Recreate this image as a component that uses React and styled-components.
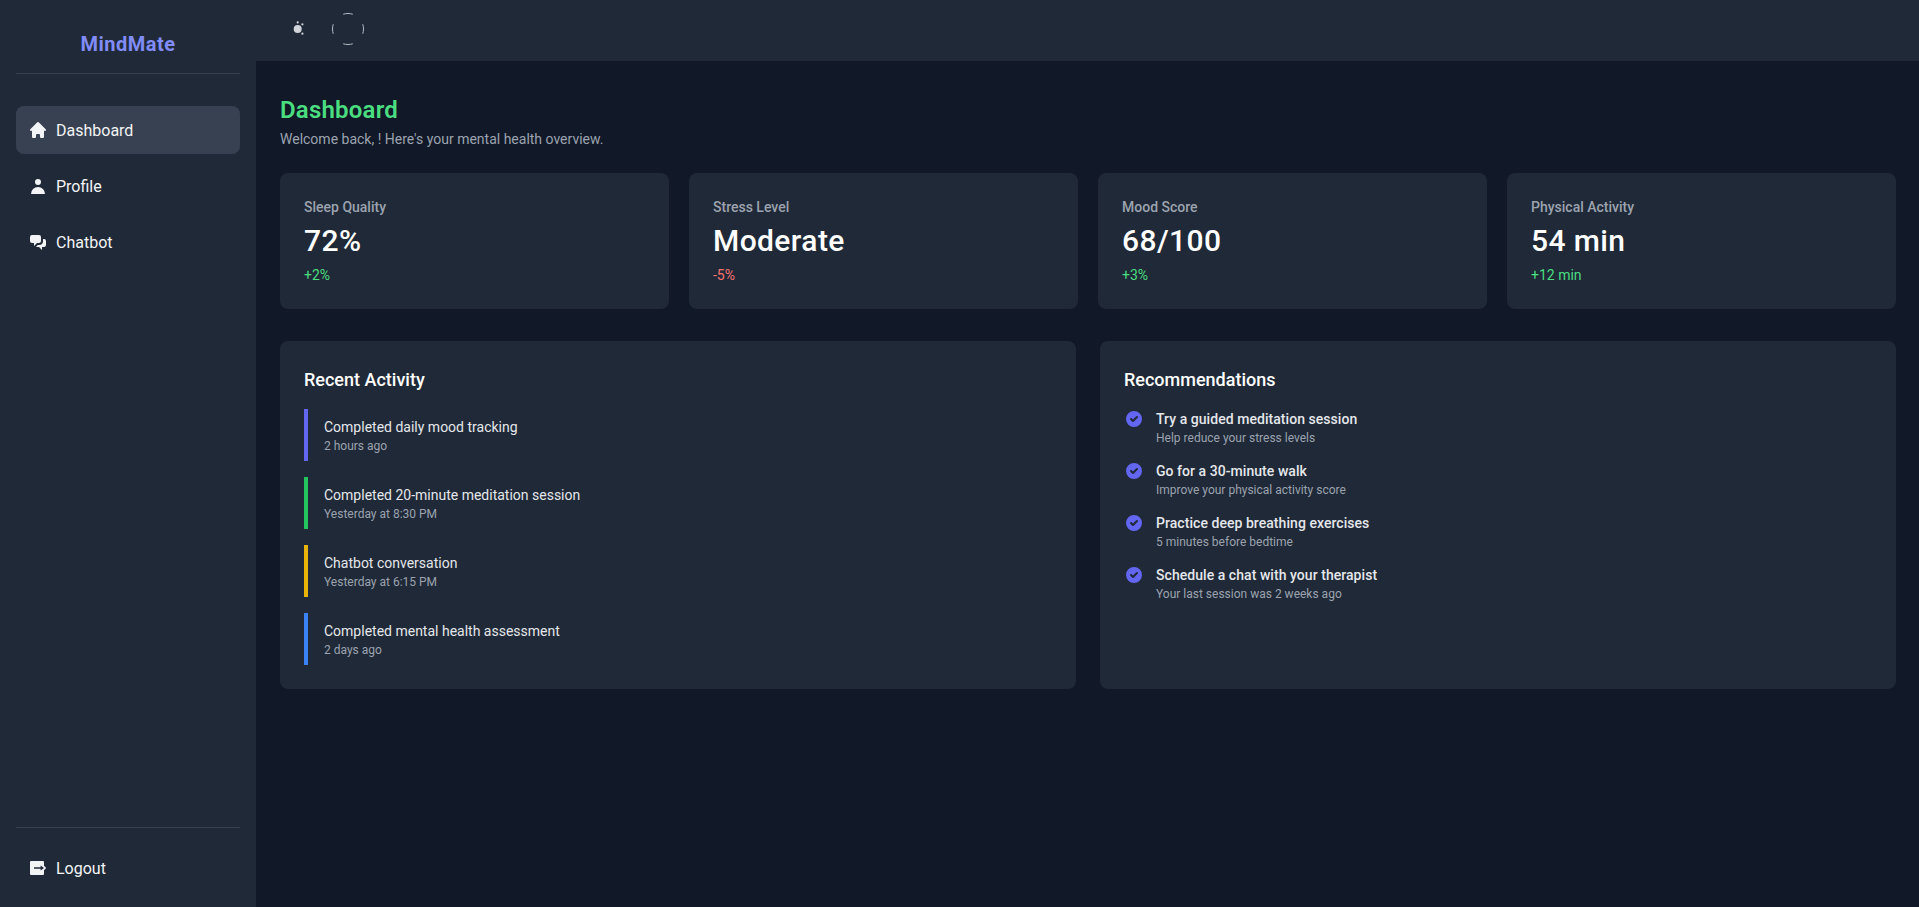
import React from 'react'
import styled, { createGlobalStyle } from 'styled-components'
import { HiHome, HiUser, HiChatAlt2, HiCheckCircle } from 'react-icons/hi'

const stats = [
  { label: 'Sleep Quality', value: '72%', delta: '+2%', good: true },
  { label: 'Stress Level', value: 'Moderate', delta: '-5%', good: false },
  { label: 'Mood Score', value: '68/100', delta: '+3%', good: true },
  { label: 'Physical Activity', value: '54 min', delta: '+12 min', good: true },
]

const activity = [
  { title: 'Completed daily mood tracking', time: '2 hours ago', color: '#6366f1' },
  { title: 'Completed 20-minute meditation session', time: 'Yesterday at 8:30 PM', color: '#22c55e' },
  { title: 'Chatbot conversation', time: 'Yesterday at 6:15 PM', color: '#eab308' },
  { title: 'Completed mental health assessment', time: '2 days ago', color: '#3b82f6' },
]

const recommendations = [
  { title: 'Try a guided meditation session', note: 'Help reduce your stress levels' },
  { title: 'Go for a 30-minute walk', note: 'Improve your physical activity score' },
  { title: 'Practice deep breathing exercises', note: '5 minutes before bedtime' },
  { title: 'Schedule a chat with your therapist', note: 'Your last session was 2 weeks ago' },
]

const SunIcon = () => (
  <svg width="20" height="20" viewBox="0 0 20 20" fill="#d1d5db">
    <circle cx="9.7" cy="10" r="4" />
    <circle cx="9.7" cy="3.4" r="1.1" />
    <circle cx="14.4" cy="5.3" r="1.1" />
    <circle cx="14.4" cy="14.7" r="1.1" />
  </svg>
)

const AvatarRing = () => (
  <svg width="32" height="32" viewBox="0 0 32 32" fill="none">
    <circle cx="16" cy="16" r="15.5" stroke="#b6bcc6" pathLength="100" strokeDasharray="10 15" strokeDashoffset="5" />
  </svg>
)

const LogoutIcon = () => (
  <svg width="20" height="20" viewBox="0 0 20 20" fill="currentColor">
    <path
      fillRule="evenodd"
      d="M3 3H15a1 1 0 0 1 1 1V16a1 1 0 0 1-1 1H3a1 1 0 0 1-1-1V4a1 1 0 0 1 1-1ZM6 9.2H12.6V7.4L16 10L12.6 12.6V10.8H6Z"
    />
    <path d="M16 7.8L18.2 10L16 12.2Z" />
  </svg>
)

const App = () => {
  return (
    <Layout>
      <GlobalStyle />
      <Sidebar>
        <Brand>MindMate</Brand>
        <Nav>
          <NavItem $active><HiHome size={20} />Dashboard</NavItem>
          <NavItem><HiUser size={20} />Profile</NavItem>
          <NavItem><HiChatAlt2 size={20} />Chatbot</NavItem>
        </Nav>
        <SidebarFooter>
          <NavItem><LogoutIcon />Logout</NavItem>
        </SidebarFooter>
      </Sidebar>
      <Content>
        <Header>
          <ThemeButton><SunIcon /></ThemeButton>
          <AvatarRing />
        </Header>
        <Main>
          <Title>Dashboard</Title>
          <Welcome>Welcome back, ! Here's your mental health overview.</Welcome>
          <StatGrid>
            {stats.map((s) => (
              <StatCard key={s.label}>
                <StatLabel>{s.label}</StatLabel>
                <StatValue>{s.value}</StatValue>
                <StatDelta $good={s.good}>{s.delta}</StatDelta>
              </StatCard>
            ))}
          </StatGrid>
          <PanelGrid>
            <Panel>
              <PanelTitle>Recent Activity</PanelTitle>
              <List>
                {activity.map((a) => (
                  <ActivityItem key={a.title} $color={a.color}>
                    <ActivityTitle>{a.title}</ActivityTitle>
                    <Small>{a.time}</Small>
                  </ActivityItem>
                ))}
              </List>
            </Panel>
            <Panel>
              <PanelTitle>Recommendations</PanelTitle>
              <List>
                {recommendations.map((r) => (
                  <RecItem key={r.title}>
                    <HiCheckCircle size={20} color="#6366f1" />
                    <div>
                      <RecTitle>{r.title}</RecTitle>
                      <Small>{r.note}</Small>
                    </div>
                  </RecItem>
                ))}
              </List>
            </Panel>
          </PanelGrid>
        </Main>
      </Content>
    </Layout>
  )
}

//styled components
const GlobalStyle = createGlobalStyle`
  * { box-sizing: border-box; }
  body {
    margin: 0;
    background: #111827;
    font-family: Roboto, "Noto Sans", sans-serif;
  }
`

const Layout = styled.div`
  display: flex;
  height: 907px;
  overflow: hidden;
`

const Sidebar = styled.aside`
  width: 256px;
  flex-shrink: 0;
  display: flex;
  flex-direction: column;
  padding: 0 16px 15px;
  background: #1f2937;
`

const Brand = styled.div`
  padding: 30px 0 15px;
  border-bottom: 1px solid #374151;
  text-align: center;
  font-size: 20px;
  line-height: 28px;
  font-weight: 700;
  letter-spacing: 0.5px;
  color: #818cf8;
`

const Nav = styled.nav`
  flex: 1;
  display: flex;
  flex-direction: column;
  gap: 8px;
  margin-top: 32px;
`

const NavItem = styled.div`
  display: flex;
  align-items: center;
  gap: 8px;
  height: 48px;
  padding: 0 12px;
  border-radius: 8px;
  background: ${(p) => (p.$active ? '#374151' : 'transparent')};
  color: #f3f4f6;
  font-size: 16px;
`

const SidebarFooter = styled.div`
  padding-top: 16px;
  border-top: 1px solid #374151;
  color: #e5e7eb;
`

const Content = styled.div`
  flex: 1;
  min-width: 0;
`

const Header = styled.header`
  display: flex;
  align-items: center;
  gap: 16px;
  height: 61px;
  padding: 0 24px 3px;
  background: #1f2937;
`

const ThemeButton = styled.div`
  display: flex;
  align-items: center;
  justify-content: center;
  width: 36px;
  height: 36px;
`

const Main = styled.main`
  padding: 32px 23px 32px 24px;
`

const Title = styled.h1`
  height: 32px;
  margin: 0 0 4px;
  padding-top: 1px;
  font-size: 24px;
  line-height: 32px;
  font-weight: 600;
  letter-spacing: 0.2px;
  color: #4ade80;
`

const Welcome = styled.p`
  margin: 0 0 24px;
  font-size: 14px;
  line-height: 20px;
  color: #9ca3af;
`

const StatGrid = styled.div`
  display: grid;
  grid-template-columns: repeat(4, 1fr);
  gap: 20px;
  margin-bottom: 32px;
`

const StatCard = styled.div`
  padding: 24px;
  border-radius: 8px;
  background: #1f2937;
`

const StatLabel = styled.div`
  margin-bottom: 4px;
  font-size: 14px;
  line-height: 20px;
  font-weight: 500;
  color: #9ca3af;
`

const StatValue = styled.div`
  height: 36px;
  margin-bottom: 8px;
  padding-top: 2px;
  font-size: 30px;
  line-height: 36px;
  font-weight: 500;
  letter-spacing: 0.4px;
  color: #fff;
`

const StatDelta = styled.div`
  font-size: 14px;
  line-height: 20px;
  color: ${(p) => (p.$good ? '#4ade80' : '#f87171')};
`

const PanelGrid = styled.div`
  display: grid;
  grid-template-columns: repeat(2, 1fr);
  gap: 24px;
`

const Panel = styled.section`
  padding: 24px;
  border-radius: 8px;
  background: #1f2937;
`

const PanelTitle = styled.h2`
  height: 28px;
  margin: 0 0 16px;
  padding-top: 1px;
  font-size: 18px;
  line-height: 28px;
  font-weight: 500;
  color: #fff;
`

const List = styled.div`
  display: flex;
  flex-direction: column;
  gap: 16px;
`

const ActivityItem = styled.div`
  padding: 8px 0 8px 16px;
  border-left: 4px solid ${(p) => p.$color};
`

const ActivityTitle = styled.div`
  font-size: 14px;
  line-height: 20px;
  color: #e5e7eb;
`

const Small = styled.div`
  height: 16px;
  padding-top: 1px;
  font-size: 12px;
  line-height: 16px;
  color: #9ca3af;
`

const RecItem = styled.div`
  display: flex;
  align-items: flex-start;
  gap: 12px;
`

const RecTitle = styled.div`
  font-size: 14px;
  line-height: 20px;
  font-weight: 500;
  letter-spacing: 0.05px;
  color: #e5e7eb;
`

export default App
